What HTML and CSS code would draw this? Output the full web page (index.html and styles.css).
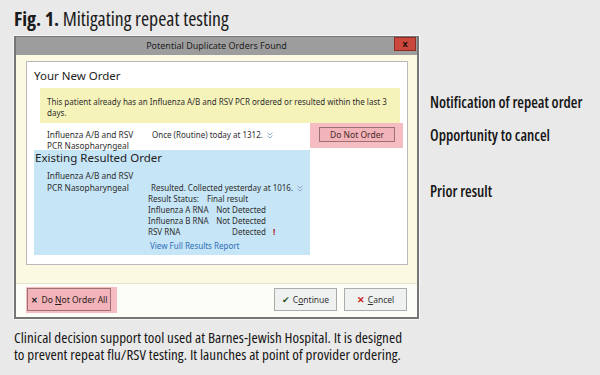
FILE: index.html
```html
<!DOCTYPE html>
<html>
<head>
<meta charset="utf-8">
<link rel="stylesheet" href="styles.css">
</head>
<body>
<div class="page">
  <h1 class="fig-title"><b>Fig. 1.</b> Mitigating repeat testing</h1>
  <div class="main">
    <div class="dialog">
      <div class="titlebar">
        <span class="tb-spacer"></span>
        <span class="title-text">Potential Duplicate Orders Found</span>
        <span class="close">x</span>
      </div>
      <div class="dlg-body">
        <div class="panel">
          <div class="sec-head">Your New Order</div>
          <div class="notice">This patient already has an Influenza A/B and RSV PCR ordered or resulted within the last 3<br>days.</div>
          <div class="order-row">
            <div class="ord-name">Influenza A/B and RSV<br>PCR Nasopharyngeal</div>
            <div class="ord-sched">Once (Routine) today at 1312. <svg class="chev" viewBox="0 0 6 7" width="6" height="7"><path d="M0.5 0.8 L3 3 L5.5 0.8 M0.5 3.8 L3 6 L5.5 3.8" fill="none" stroke="#8fa8c8" stroke-width="1"/></svg></div>
            <div class="hl hl-order"><span class="btn btn-pink btn-dno"><span>Do Not Order</span></span></div>
          </div>
          <div class="existing">
            <div class="sec-head sec-head-blue">Existing Resulted Order</div>
            <div class="ex-row">
              <div class="ex-name">Influenza A/B and RSV<br>PCR Nasopharyngeal</div>
              <div class="ex-detail">
                <div class="ex-first">Resulted. Collected yesterday at 1016. <svg class="chev" viewBox="0 0 6 7" width="6" height="7"><path d="M0.5 0.8 L3 3 L5.5 0.8 M0.5 3.8 L3 6 L5.5 3.8" fill="none" stroke="#8fa8c8" stroke-width="1"/></svg></div>
                <div class="res-row"><span class="lab-status">Result Status:</span><span>Final result</span></div>
                <div class="res-row"><span class="lab">Influenza A RNA</span><span class="val">Not Detected</span></div>
                <div class="res-row"><span class="lab">Influenza B RNA</span><span class="val">Not Detected</span></div>
                <div class="res-row"><span class="lab">RSV RNA</span><span class="val">Detected</span><span class="flag">!</span></div>
                <a class="link">View Full Results Report</a>
              </div>
            </div>
          </div>
        </div>
      </div>
      <div class="dlg-foot">
        <div class="hl hl-all"><span class="btn btn-pink btn-all"><span class="ico-x">✕</span><span>Do <u>N</u>ot Order All</span></span></div>
        <div class="foot-right">
          <span class="btn btn-gray"><span class="ico-check">✔</span><span>C<u>o</u>ntinue</span></span>
          <span class="btn btn-gray"><span class="ico-cancel">✕</span><span><u>C</u>ancel</span></span>
        </div>
      </div>
    </div>
    <div class="labels">
      <div class="label l1">Notification of repeat order</div>
      <div class="label l2">Opportunity to cancel</div>
      <div class="label l3">Prior result</div>
    </div>
  </div>
  <p class="caption">Clinical decision support tool used at Barnes-Jewish Hospital. It is designed<br>to prevent repeat flu/RSV testing. It launches at point of provider ordering.</p>
</div>
</body>
</html>
```

FILE: styles.css
```css
* { box-sizing: border-box; }
html, body { margin: 0; padding: 0; }
body {
  background: #e9e9e9;
  width: 600px;
  height: 375px;
  overflow: hidden;
}
.page {
  padding-left: 14px;
  font-family: "Open Sans", "Liberation Sans", sans-serif;
  font-stretch: 75%;
  color: #111;
}
.fig-title {
  margin: 0 0 5px 0;
  padding-top: 7px;
  font-size: 19.8px;
  line-height: 24px;
  font-weight: 400;
  color: #1a1a1a;
}
.fig-title b { font-weight: 700; }

.main { display: flex; align-items: flex-start; }

.dialog {
  flex: none;
  width: 405px;
  border: 2px solid #767676;
  border-top-width: 1px;
  box-shadow: 0 0 0 1px #f6f6f6;
  font-family: "Noto Sans", "Open Sans", sans-serif;
  font-stretch: 100%;
  color: #333;
  display: flex;
  flex-direction: column;
}
.titlebar {
  height: 18px;
  background: #9d9d9d;
  display: grid;
  grid-template-columns: 1fr auto 1fr;
  align-items: start;
}
.title-text {
  font-size: 9px;
  line-height: 18px;
  color: #1e1e1e;
}
.close {
  justify-self: end;
  width: 22px;
  height: 14px;
  margin-right: 1px;
  background: #c9473c;
  border: 1px solid #8e2c24;
  color: #2a0c0c;
  font-weight: 700;
  font-size: 9px;
  line-height: 11px;
  text-align: center;
}
.dlg-body {
  background: #fbf9e2;
  padding: 6px 9px 18px 10px;
}
.panel {
  background: #fff;
  border: 1px solid #b9b9b9;
  height: 204px;
  padding: 0 0 9px 0;
}
.sec-head {
  font-size: 11.5px;
  line-height: 16px;
  color: #222;
  margin: 6px 0 4px 7px;
}
.notice {
  margin-left: 13px;
  width: 360px;
  height: 35px;
  background: #f6f3ba;
  padding: 8px 7px 5px 7px;
  font-size: 8px;
  line-height: 11px;
  color: #2e2e2e;
}
.order-row {
  display: flex;
  height: 27px;
  font-size: 8px;
  line-height: 11px;
  color: #2e2e2e;
}
.ord-name {
  margin-left: 20px;
  width: 105px;
  padding-top: 6px;
  white-space: nowrap;
  font-size: 8.3px;
}
.ord-sched {
  width: 158px;
  padding-top: 6px;
  white-space: nowrap;
}
.chev { vertical-align: -1px; margin-left: 2px; }
.hl {
  background: #f5bcc1;
}
.hl-order {
  width: 93px;
  height: 25px;
  padding: 4px 0 0 9px;
}
.btn {
  display: flex;
  align-items: center;
  justify-content: center;
  font-size: 8.5px;
  color: #333;
}
.btn-pink {
  background: #f2b3b9;
  border: 1px solid #9d7075;
}
.btn-dno {
  width: 76px;
  height: 15px;
  color: #4a2a2c;
}
.existing {
  margin-left: 7px;
  width: 276px;
  height: 105px;
  background: #c6e5f6;
}
.sec-head-blue {
  margin: 0 0 0 1px;
}
.ex-row {
  display: flex;
  margin-top: 4px;
  font-size: 8px;
  color: #2e2e2e;
}
.ex-name {
  margin-left: 13px;
  width: 101px;
  line-height: 12px;
  white-space: nowrap;
  font-size: 8.3px;
}
.ex-detail {
  padding-top: 12px;
  line-height: 11px;
  white-space: nowrap;
}
.ex-first { padding-left: 3px; }
.res-row { display: flex; }
.lab-status { margin-right: 8px; }
.lab { width: 67px; }
.val { width: 51px; text-align: right; }
.flag {
  margin-left: 7px;
  color: #a3161a;
  font-weight: 700;
}
.link {
  display: block;
  margin-top: 3px;
  padding-left: 2px;
  color: #2f6fb8;
}

.dlg-foot {
  height: 34px;
  background: #fdfdf8;
  border-top: 1px solid #e4e2cf;
  display: flex;
  align-items: flex-start;
  justify-content: space-between;
  padding: 0 10px;
}
.hl-all {
  margin-top: 3px;
  width: 91px;
  height: 26px;
  padding: 1px 0 0 1px;
}
.btn-all {
  width: 84px;
  height: 23px;
  color: #2a1a1a;
}
.ico-x { font-size: 8px; font-weight: 700; margin-right: 4px; color: #222; }
.foot-right {
  display: flex;
  gap: 7px;
  margin-top: 4px;
}
.btn-gray {
  width: 63px;
  height: 23px;
  background: #eff1f1;
  border: 1px solid #a9acad;
  color: #333;
}
.ico-check { color: #2c5a2e; font-size: 9px; margin-right: 3px; }
.ico-cancel { color: #cc2020; font-size: 9px; font-weight: 700; margin-right: 3px; }

.labels {
  margin-left: 11px;
  padding-top: 58px;
  display: flex;
  flex-direction: column;
}
.label {
  font-size: 15.2px;
  line-height: 17px;
  font-weight: 650;
  color: #151515;
  white-space: nowrap;
}
.l2 { margin-top: 16px; }
.l3 { margin-top: 39px; }

.caption {
  margin: 10px 0 0 0;
  font-size: 15px;
  letter-spacing: 0.05px;
  line-height: 16.5px;
  color: #151515;
}
```
